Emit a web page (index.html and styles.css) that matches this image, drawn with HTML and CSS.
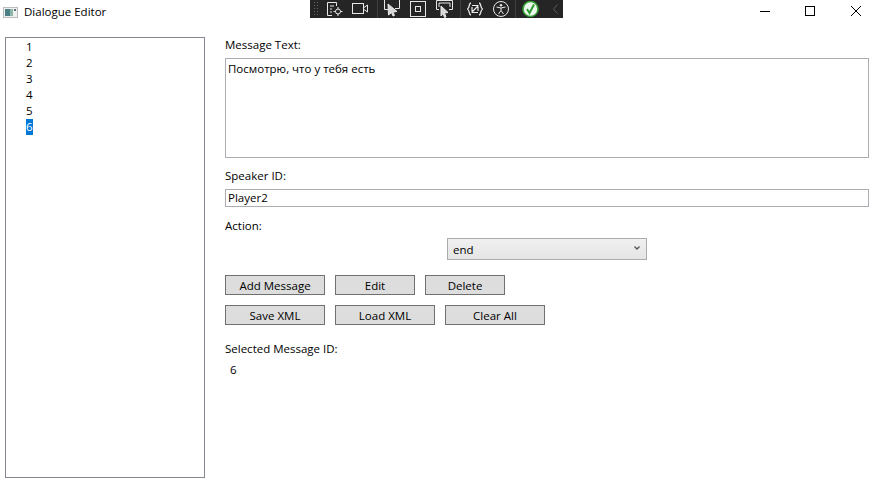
FILE: index.html
```html
<!DOCTYPE html>
<html lang="en">
<head>
    <meta charset="UTF-8">
    <meta name="viewport" content="width=device-width, initial-scale=1.0">
    <title>Dialogue Editor</title>
    <link rel="stylesheet" href="styles.css">
</head>
<body>

    <header class="titlebar">
        <div class="title-left">
            <svg class="app-icon" width="15" height="16" viewBox="0 0 15 16">
                <rect x="0.5" y="3.5" width="14" height="10" fill="#eef0f1" stroke="#b9bdc0"/>
                <rect x="2" y="5" width="5" height="7" fill="#4d7f86"/>
                <rect x="7" y="5" width="3" height="7" fill="#8fb5a8"/>
                <rect x="11" y="5" width="2" height="2" fill="#5c7078"/>
            </svg>
            <span>Dialogue Editor</span>
        </div>

        <div class="debug-bar">
            <span class="grip"></span>
            <svg class="tool gap-9" width="16" height="16" viewBox="0 0 16 16" fill="none" stroke="#e8e8e8">
                <path d="M0.500 1.500H9.500V5M0.500 1.500V14.500H5M3 5H7M3 8H5M3 11H5"/>
                <circle cx="11" cy="10.500" r="2.500"/>
                <path d="M11 6V8M11 13V15M6.500 10.500H8.500M13.500 10.500H15.500"/>
            </svg>
            <svg class="tool" width="16" height="14" viewBox="0 0 16 14" fill="none" stroke="#e8e8e8">
                <rect x="0.500" y="1.500" width="11" height="10"/>
                <path d="M12 5.500L15.500 3V10L12 7.500"/>
            </svg>
            <i class="sep sep-a"></i>
            <svg class="tool gap-10" width="16" height="18" viewBox="0 0 16 18" fill="none" stroke="#e8e8e8">
                <path d="M0.500 0V9.500H4M11 8.500H15.500V0"/>
                <path d="M4 4L13 11.500L9 12L10.500 15.500L9 16L7.500 12.500L4.500 15Z" fill="#d8d8d8"/>
            </svg>
            <svg class="tool gap-10" width="16" height="16" viewBox="0 0 16 16" fill="none" stroke="#e8e8e8">
                <rect x="0.500" y="0.500" width="15" height="15"/>
                <rect x="5.500" y="5.500" width="5" height="5"/>
            </svg>
            <svg class="tool" width="17" height="18" viewBox="0 0 17 18" fill="none" stroke="#e8e8e8">
                <path d="M3 9.500H0.500V0.500H16.500V9.500H13"/>
                <path d="M3 7V3H14V7"/>
                <path d="M5 6L12 12.500L8.500 13L10 17L8.500 17.500L7 13.500L5 16Z" fill="#d8d8d8"/>
            </svg>
            <i class="sep sep-b"></i>
            <svg class="tool gap-10" width="16" height="14" viewBox="0 0 16 14" fill="none" stroke="#e8e8e8">
                <path d="M4 1C1.500 1 3 5.500 0.500 7C3 8.500 1.500 13 4 13M12 1C14.500 1 13 5.500 15.500 7C13 8.500 14.500 13 12 13" stroke-width="1.300"/>
                <path d="M5 3.500L11 3.500M5 10.500L11 10.500M4.500 10.500L11.500 3.500M5 5V9M11 5V9" stroke-width="1.200"/>
            </svg>
            <svg class="tool" width="16" height="16" viewBox="0 0 16 16" fill="none" stroke="#e8e8e8">
                <circle cx="8" cy="8" r="7.500"/>
                <circle cx="8" cy="4.200" r="1.200" fill="#e8e8e8" stroke="none"/>
                <path d="M3.500 6L8 7L12.500 6M8 7V9.500L5.500 13M8 9.500L10.500 13"/>
            </svg>
            <i class="sep sep-c"></i>
            <svg class="tool gap-14" width="17" height="18" viewBox="0 0 17 18" fill="none">
                <circle cx="8.500" cy="9" r="7.500" fill="#eef7ee" stroke="#34a034" stroke-width="1.600"/>
                <path d="M5 9L7.500 13L12 4.500" stroke="#2d9a2d" stroke-width="2"/>
            </svg>
            <svg class="tool" width="5" height="10" viewBox="0 0 5 10" fill="none" stroke="#5c5c5c">
                <path d="M4.500 0.500L0.500 5L4.500 9.500"/>
            </svg>
        </div>

        <div class="window-btns">
            <svg width="10" height="10" viewBox="0 0 10 10" stroke="#000"><path d="M0 5.500H10"/></svg>
            <svg width="10" height="10" viewBox="0 0 10 10" fill="none" stroke="#000"><rect x="0.500" y="0.500" width="9" height="9"/></svg>
            <svg class="close-btn" width="10" height="10" viewBox="0 0 10 10" stroke="#000"><path d="M0 0L10 10M10 0L0 10"/></svg>
        </div>
    </header>

    <main class="content">
        <ul class="msg-list">
            <li><span>1</span></li>
            <li><span>2</span></li>
            <li><span>3</span></li>
            <li><span>4</span></li>
            <li><span>5</span></li>
            <li><span class="selected">6</span></li>
        </ul>

        <section class="editor">
            <label class="field-label">Message Text:</label>
            <div class="text-area">Посмотрю, что у тебя есть</div>

            <label class="field-label speaker-label">Speaker ID:</label>
            <div class="text-input">Player2</div>

            <label class="field-label action-label">Action:</label>
            <div class="combo-row">
                <div class="combo">
                    <span>end</span>
                    <svg class="combo-arrow" width="6" height="4" viewBox="0 0 6 4" fill="none" stroke="#555" stroke-width="1.300"><path d="M0.500 0.500L3 3L5.500 0.500"/></svg>
                </div>
            </div>

            <div class="btn-row">
                <button class="btn wide">Add Message</button>
                <button class="btn">Edit</button>
                <button class="btn">Delete</button>
            </div>
            <div class="btn-row second">
                <button class="btn wide">Save XML</button>
                <button class="btn wide">Load XML</button>
                <button class="btn wide">Clear All</button>
            </div>

            <label class="field-label selected-label">Selected Message ID:</label>
            <div class="selected-id">6</div>
        </section>
    </main>

</body>
</html>
```

FILE: styles.css
```css
html, body {
    margin: 0;
    height: 484px;
    overflow: hidden;
}

body {
    font-family: 'Open Sans', 'Noto Sans', sans-serif;
    font-size: 11.5px;
    color: #000;
    background-color: #fff;
}

.titlebar {
    display: flex;
    height: 30px;
}

.title-left {
    display: flex;
    align-items: center;
    gap: 6px;
    height: 23px;
    padding-left: 3px;
    width: 310px;
    box-sizing: border-box;
}

.debug-bar {
    display: flex;
    align-items: center;
    width: 253px;
    height: 18px;
    background-color: #252526;
    padding-left: 3px;
    box-sizing: border-box;
}

.grip {
    width: 6px;
    height: 16px;
    margin-right: 8px;
    background-image: radial-gradient(#666 0.6px, transparent 0.8px);
    background-size: 3px 3px;
}

.tool {
    flex-shrink: 0;
}

.sep {
    width: 1px;
    height: 18px;
    background-color: #3f3f46;
    margin-right: 6px;
}

.sep-a { margin-left: 9px; }
.sep-b { margin-left: 7px; }
.sep-c { margin-left: 6px; }

.gap-9 { margin-right: 9px; }
.gap-10 { margin-right: 10px; }
.gap-14 { margin-right: 14px; }

.window-btns {
    display: flex;
    gap: 35px;
    margin-left: auto;
    padding: 6px 14px 0 0;
    height: 10px;
}

.close-btn {
    margin-left: 1px;
}

.content {
    display: flex;
    padding: 7px 6px 0 5px;
}

.msg-list {
    list-style: none;
    margin: 0;
    padding: 1px 0 0 20px;
    box-sizing: border-box;
    width: 200px;
    height: 441px;
    border: 1px solid #828790;
    flex-shrink: 0;
}

.msg-list li {
    height: 16px;
    line-height: 16px;
}

.msg-list span {
    display: inline-block;
}

.msg-list .selected {
    background-color: #0078d7;
    color: #fff;
}

.editor {
    flex: 1;
    margin-left: 20px;
}

.field-label {
    display: block;
    height: 16px;
    line-height: 16px;
}

.text-area {
    height: 94px;
    margin-top: 5px;
    padding: 2px;
    border: 1px solid #abadb3;
    line-height: 16px;
}

.speaker-label {
    margin-top: 10px;
}

.text-input {
    height: 16px;
    line-height: 16px;
    margin-top: 5px;
    padding: 0 2px;
    border: 1px solid #abadb3;
}

.action-label {
    margin-top: 11px;
}

.combo-row {
    display: flex;
    justify-content: center;
    margin-top: 4px;
}

.combo {
    display: flex;
    align-items: center;
    justify-content: space-between;
    box-sizing: border-box;
    width: 200px;
    height: 22px;
    padding: 0 6px 0 5px;
    border: 1px solid #acacac;
    background: linear-gradient(#f0f0f0, #e5e5e5);
}

.combo-arrow {
    margin-bottom: 3px;
}

.btn-row {
    display: flex;
    gap: 10px;
    margin-top: 15px;
}

.btn-row.second {
    margin-top: 10px;
}

.btn {
    width: 80px;
    height: 20px;
    padding: 0;
    font: inherit;
    color: #000;
    background-color: #ddd;
    border: 1px solid #707070;
}

.btn.wide {
    width: 100px;
}

.selected-label {
    margin-top: 16px;
}

.selected-id {
    margin-top: 5px;
    padding-left: 5px;
    line-height: 16px;
}
```
